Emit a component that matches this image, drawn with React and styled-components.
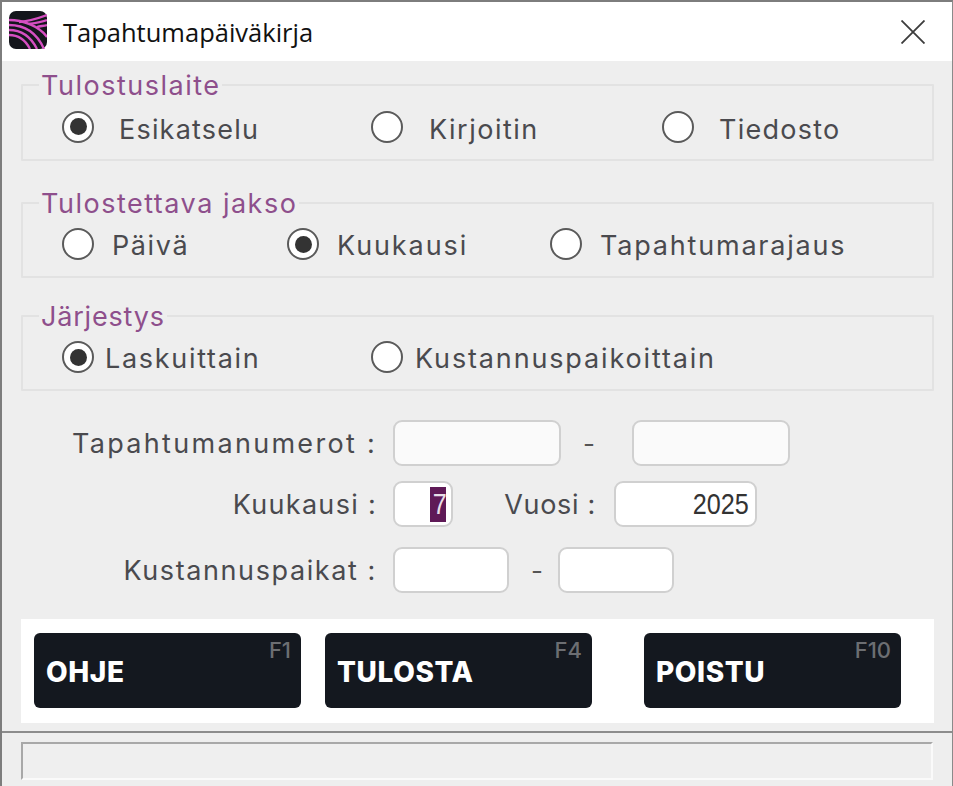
import React from "react";
import styled, { createGlobalStyle } from "styled-components";

const Global = createGlobalStyle`
  html, body { margin: 0; padding: 0; background: #eeeeee; }
  * { box-sizing: border-box; }
`;

const Win = styled.div`
  width: 953px; height: 786px; display: flex; flex-direction: column;
  background: #eeeeee; overflow: hidden;
  border-top: 2px solid #7d7d7d; border-left: 2px solid #7d7d7d; border-right: 1px solid #8a8a8a;
  font-family: Inter, "Liberation Sans", sans-serif; color: #4a4a4e;
`;
const TitleBar = styled.div`
  height: 59px; flex: none; background: #fff; display: flex; align-items: center;
  padding: 0 27px 0 7px;
`;
const Logo = styled.svg`width: 38px; height: 38px; flex: none; margin-top: -3px;`;
const Title = styled.div`
  margin-left: 16px; flex: 1; font-family: "Open Sans", sans-serif; font-size: 25.5px; color: #111; margin-top: 1px;
`;
const Close = styled.svg`width: 24px; height: 24px; flex: none;`;
const Body = styled.div`
  flex: none; display: flex; flex-direction: column; padding: 0 19px;
`;
const Group = styled.fieldset`
  margin: ${p => p.$top}px 0 0; padding: 0; height: ${p => p.$h ?? 91}px; width: 913px; min-width: 0;
  border: 2px solid #e2e2e2; border-radius: 1px;
`;
const Legend = styled.legend`
  margin-left: 16px; padding: 2px 2px 0; font-size: 27px; line-height: 30px; color: #8e4f8c; letter-spacing: ${p => p.$sp ?? 1.5}px;
`;
const Options = styled.div`
  display: grid; grid-template-columns: ${p => p.$cols}; margin: ${p => p.$top}px 0 0 39px; align-items: center; height: 36px;
`;
const Option = styled.label`
  display: flex; align-items: center; gap: ${p => p.$gap}px; font-size: 27px; color: #4a4a4e; white-space: nowrap;
`;
const OptionText = styled.span`
  padding-top: ${p => p.$drop}px; letter-spacing: ${p => p.$sp ?? 1.6}px;
`;
const Radio = styled.span`
  width: 32px; height: 32px; flex: none; border-radius: 50%; background: #fff; border: 2px solid #5a5a5a;
  display: flex; align-items: center; justify-content: center;
  &::after { content: ""; width: 17px; height: 17px; border-radius: 50%; background: ${p => p.$on ? "#333" : "transparent"}; }
`;
const Form = styled.div`
  display: flex; flex-direction: column; margin-top: 29px;
`;
const Row = styled.div`
  display: flex; align-items: center; height: 46px; margin-top: ${p => p.$top || 0}px;
`;
const Label = styled.div`
  width: 356px; flex: none; text-align: right; font-size: 27px; white-space: nowrap; letter-spacing: ${p => p.$sp ?? 1.5}px;
`;
const Input = styled.div`
  width: ${p => p.$w}px; height: 46px; margin-left: ${p => p.$ml || 0}px; flex: none; border: 2px solid #d0d0d0; border-radius: 9px;
  background: ${p => p.$off ? "#fafafa" : "#fff"}; display: flex; align-items: center; justify-content: flex-end;
  font-family: "Liberation Sans", sans-serif; font-size: 30px; color: #333; padding-right: ${p => p.$pr ?? 6}px;
`;
const Digits = styled.span`
  display: inline-block; transform: scaleX(0.84); transform-origin: right center;
`;
const Selected = styled.span`
  background: #5f1a57; color: #e8dfe8; width: 16px; height: 35px; display: flex; align-items: center; justify-content: center;
`;
const Dash = styled.div`
  width: ${p => p.$w}px; flex: none; padding-left: 22px; font-size: 26px; color: #555;
`;
const Side = styled.div`
  width: 143px; flex: none; text-align: right; font-size: 27px; white-space: nowrap; letter-spacing: 0.7px;
`;
const Buttons = styled.div`
  margin-top: 26px; width: 913px; height: 104px; background: #fff; padding: 14px 13px; display: flex;
`;
const Btn = styled.div`
  position: relative; width: ${p => p.$w}px; height: 75px; margin-left: ${p => p.$ml || 0}px; background: #14181f; border-radius: 6px;
  color: #fff; font-weight: 800; font-size: 28px; letter-spacing: 0.6px; display: flex; align-items: center; padding: 3px 0 0 12px;
`;
const Key = styled.span`
  position: absolute; top: 4px; right: 10px; font-size: 22px; font-weight: 500; color: #6c6e72; letter-spacing: 0;
`;
const Divider = styled.div`
  height: 2px; flex: none; background: #8c8c8c; margin-top: 8px;
`;
const Status = styled.div`
  margin: 9px 0 0 19px; width: 912px; height: 38px; flex: none; background: #efefef;
  border-top: 2px solid #a8a8a8; border-left: 2px solid #a8a8a8; border-right: 2px solid #fafafa; border-bottom: 2px solid #fafafa;
`;

export default function App() {
  return (
    <Win>
      <Global />
      <TitleBar>
        <Logo viewBox="0 0 38 38">
          <rect width="38" height="38" rx="7" fill="#14161c" />
          <g fill="none" stroke="#d64fc2" strokeWidth="2.3">
            <path d="M0 9 C14 9 30 15 38 26" />
            <path d="M0 14 C14 14 27 20 35 38" />
            <path d="M0 19 C12 19 22 26 28 38" />
            <path d="M0 24 C10 24 17 30 21 38" />
            <path d="M10 11 C20 10 30 7 38 4" />
            <path d="M20 13 C27 12 33 11 38 9" />
            <path d="M28 16 C31 15 35 15 38 14" />
          </g>
        </Logo>
        <Title>Tapahtumapäiväkirja</Title>
        <Close viewBox="0 0 24 24"><path d="M0.5 0.5 L23.5 23.5 M23.5 0.5 L0.5 23.5" stroke="#3c3c3c" strokeWidth="1.8" /></Close>
      </TitleBar>
      <Body>
        <Group $top={8} $h={92}>
          <Legend>Tulostuslaite</Legend>
          <Options $cols="309px 291px 1fr" $top={6}>
            <Option $gap={25}><Radio $on /><OptionText $drop={6} $sp={1.2}>Esikatselu</OptionText></Option>
            <Option $gap={26}><Radio /><OptionText $drop={6} $sp={1.5}>Kirjoitin</OptionText></Option>
            <Option $gap={25}><Radio /><OptionText $drop={6} $sp={1.25}>Tiedosto</OptionText></Option>
          </Options>
        </Group>
        <Group $top={26}>
          <Legend>Tulostettava jakso</Legend>
          <Options $cols="225px 263px 1fr" $top={7}>
            <Option $gap={18}><Radio /><OptionText $drop={3}>Päivä</OptionText></Option>
            <Option $gap={18}><Radio $on /><OptionText $drop={3} $sp={1.9}>Kuukausi</OptionText></Option>
            <Option $gap={18}><Radio /><OptionText $drop={3} $sp={1.8}>Tapahtumarajaus</OptionText></Option>
          </Options>
        </Group>
        <Group $top={22}>
          <Legend $sp={0.8}>Järjestys</Legend>
          <Options $cols="309px 1fr" $top={7}>
            <Option $gap={11}><Radio $on /><OptionText $drop={3} $sp={1.7}>Laskuittain</OptionText></Option>
            <Option $gap={12}><Radio /><OptionText $drop={3} $sp={1.85}>Kustannuspaikoittain</OptionText></Option>
          </Options>
        </Group>
        <Form>
          <Row>
            <Label $sp={2.3}>Tapahtumanumerot :</Label>
            <Input $w={168} $off $ml={16} />
            <Dash $w={71}>-</Dash>
            <Input $w={158} $off />
          </Row>
          <Row $top={15}>
            <Label $sp={1.3}>Kuukausi :</Label>
            <Input $w={60} $ml={16} $pr={5}><Selected><Digits>7</Digits></Selected></Input>
            <Side>Vuosi :</Side>
            <Input $w={143} $ml={18}><Digits>2025</Digits></Input>
          </Row>
          <Row $top={20}>
            <Label $sp={1.6}>Kustannuspaikat :</Label>
            <Input $w={116} $ml={16} />
            <Dash $w={49}>-</Dash>
            <Input $w={116} />
          </Row>
        </Form>
        <Buttons>
          <Btn $w={267}>OHJE<Key>F1</Key></Btn>
          <Btn $w={267} $ml={24}>TULOSTA<Key>F4</Key></Btn>
          <Btn $w={257} $ml={52}>POISTU<Key>F10</Key></Btn>
        </Buttons>
      </Body>
      <Divider />
      <Status />
    </Win>
  );
}
